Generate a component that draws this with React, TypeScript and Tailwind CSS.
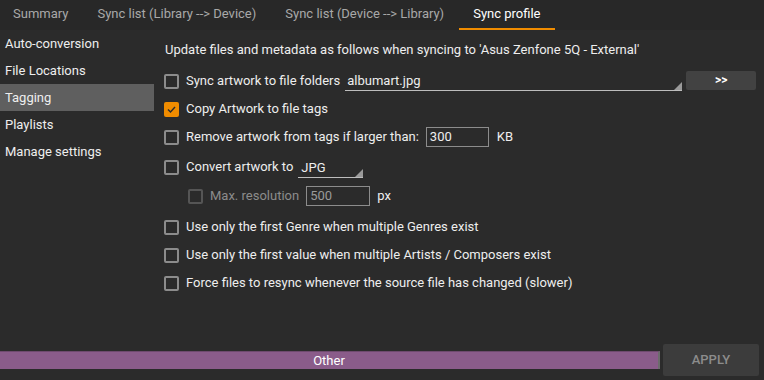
import React from "react";

const font = { fontFamily: "Roboto, 'Liberation Sans', sans-serif" };

function Box({ checked = false, disabled = false }: { checked?: boolean; disabled?: boolean }) {
  if (checked) {
    return (
      <div className="w-[15px] h-[15px] shrink-0 rounded-[2px] bg-[#f08c00] flex items-center justify-center">
        <svg width="11" height="11" viewBox="0 0 11 11">
          <path d="M2 5.5 L4.5 8 L9 3" fill="none" stroke="#2b2b2b" strokeWidth="1.4" />
        </svg>
      </div>
    );
  }
  return (
    <div
      className={
        "w-[15px] h-[15px] shrink-0 rounded-[2px] border-2 " +
        (disabled ? "border-[#555555]" : "border-[#8c8c8c]")
      }
    />
  );
}

function Row({ children, className = "" }: { children: React.ReactNode; className?: string }) {
  return <div className={"h-[28px] flex items-center gap-[7px] " + className}>{children}</div>;
}

function Corner() {
  return (
    <svg width="8" height="8" viewBox="0 0 8 8" className="absolute right-0 bottom-0">
      <path d="M8 0 L8 8 L0 8 Z" fill="#9a9a9a" />
    </svg>
  );
}

export default function App() {
  const tabs = ["Summary", "Sync list (Library --> Device)", "Sync list (Device --> Library)", "Sync profile"];
  const side = ["Auto-conversion", "File Locations", "Tagging", "Playlists", "Manage settings"];

  return (
    <div className="w-[764px] h-[380px] bg-[#2b2b2b] text-[13px] text-[#eeeeee] flex flex-col overflow-hidden" style={font}>
      <div className="h-[30px] flex bg-[#282828] ml-[-1.5px]">
        {tabs.map((t, i) => (
          <div
            key={t}
            className={
              "px-[14.5px] flex items-center border-b-2 " +
              (i === 3 ? "border-[#f08c00] text-white" : "border-transparent text-[#a8a8a8]")
            }
          >
            {t}
          </div>
        ))}
      </div>

      <div className="flex flex-1">
        <div className="w-[154px] flex flex-col">
          {side.map((s) => (
            <div key={s} className={"h-[27px] flex items-center pl-[5px] " + (s === "Tagging" ? "bg-[#5f5f5f]" : "")}>
              {s}
            </div>
          ))}
        </div>

        <div className="flex-1 pl-[10px] flex flex-col">
          <div className="h-[20px] mt-[10px] flex items-center pl-[1px]">
            Update files and metadata as follows when syncing to 'Asus Zenfone 5Q - External'
          </div>

          <Row className="mt-[7px]">
            <Box />
            <span>Sync artwork to file folders</span>
            <div className="relative w-[337px] h-[20px] border-b border-[#bdbdbd] flex items-center pl-[2px] ml-[-2px]">
              albumart.jpg
              <Corner />
            </div>
            <button className="ml-[-3px] w-[70px] h-[19px] rounded-[2px] bg-[#424242] text-[12px] font-bold text-white flex items-center justify-center mb-[2px]">
              &gt;&gt;
            </button>
          </Row>

          <Row>
            <Box checked />
            <span>Copy Artwork to file tags</span>
          </Row>

          <Row>
            <Box />
            <span>Remove artwork from tags if larger than:</span>
            <div className="w-[63px] h-[20px] border border-[#8c8c8c] flex items-center pl-[3px]">300</div>
            <span className="ml-[1px]">KB</span>
          </Row>

          <Row className="mt-[2px]">
            <Box />
            <span>Convert artwork to</span>
            <div className="relative w-[65px] h-[20px] border-b border-[#bdbdbd] flex items-center pl-[3px] ml-[-2px] mt-[2px]">
              JPG
              <Corner />
            </div>
          </Row>

          <Row className="mt-[1px] pl-[24px]">
            <Box disabled />
            <span className="text-[#8c8c8c]">Max. resolution</span>
            <div className="w-[64px] h-[20px] border border-[#8c8c8c] flex items-center pl-[3px] text-[#9a9a9a]">500</div>
            <span>px</span>
          </Row>

          <Row className="mt-[3px]">
            <Box />
            <span>Use only the first Genre when multiple Genres exist</span>
          </Row>

          <Row>
            <Box />
            <span>Use only the first value when multiple Artists / Composers exist</span>
          </Row>

          <Row>
            <Box />
            <span>Force files to resync whenever the source file has changed (slower)</span>
          </Row>
        </div>
      </div>

      <div className="h-[37px] flex items-center pb-[3px]">
        <div className="w-[660px] h-[18px] bg-[#8a5c8a] border-t border-[#6e4a6e] border-r-2 border-r-[#6c6c6c] flex items-center justify-center text-white">
          Other
        </div>
        <button className="ml-[3px] w-[96px] h-[32px] rounded-[2px] bg-[#3c3c3c] text-[#8c8c8c] font-medium flex items-center justify-center">
          APPLY
        </button>
      </div>
    </div>
  );
}
